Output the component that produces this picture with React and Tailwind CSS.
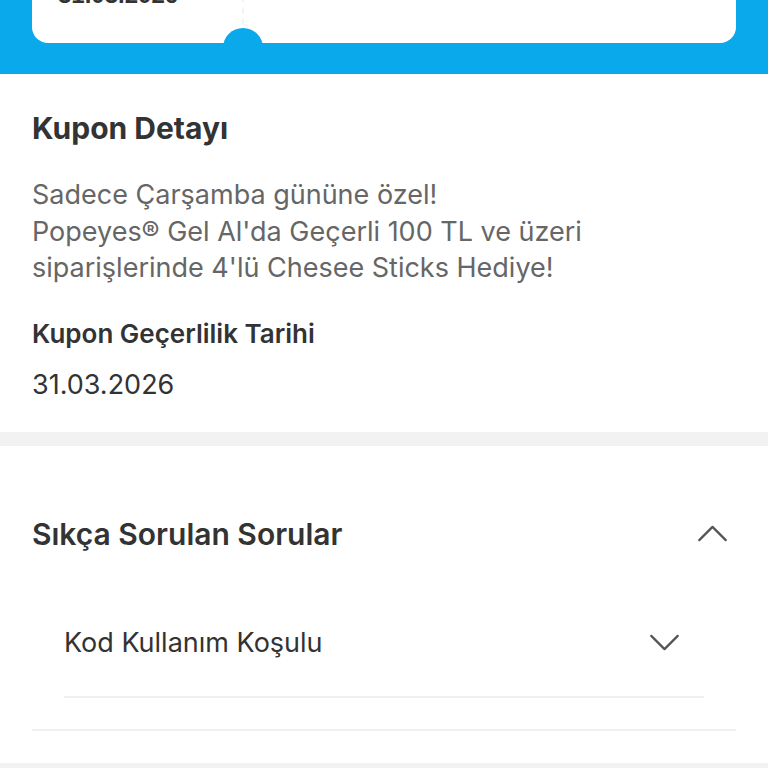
const font = { fontFamily: 'Inter, "Noto Sans", sans-serif' }

function Chevron({ up, className }) {
  return (
    <svg viewBox="0 0 32 18" className={className} fill="none" stroke="currentColor" strokeWidth="2.4" strokeLinecap="round" strokeLinejoin="round">
      <polyline points={up ? '2,16 16,2 30,16' : '2,2 16,16 30,2'} />
    </svg>
  )
}

function CouponTop() {
  return (
    <div className="flex h-[74px] flex-col bg-[#0aa9ec] px-8">
      <div className="relative -mt-[60px] flex h-[103px] flex-col justify-end rounded-b-2xl bg-white pb-[36px] pl-[26px]">
        <span className="text-[24px] font-bold leading-none text-[#333]" style={{ fontFamily: '"Liberation Sans", Arial, sans-serif' }}>
          31.03.2026
        </span>
        <div className="absolute bottom-[18px] left-[210px] h-[40px] border-l-2 border-dashed border-gray-100" />
        <div className="absolute -bottom-[25px] left-[191px] h-[40px] w-[40px] rounded-full bg-[#0aa9ec]" />
      </div>
    </div>
  )
}

function CouponDetail() {
  return (
    <section className="bg-white px-8 pb-[29px] pt-[36px]">
      <h2 className="text-[30px] font-bold leading-[36px] text-[#333]">Kupon Detayı</h2>
      <p className="mt-[31px] text-[27px] leading-[36.5px] text-[#666]">
        Sadece Çarşamba gününe özel!
        <br />
        Popeyes® Gel Al'da Geçerli 100 TL ve üzeri
        <br />
        siparişlerinde 4'lü Chesee Sticks Hediye!
      </p>
      <h3 className="mt-[29px] text-[26px] font-semibold leading-[36px] text-[#333]">Kupon Geçerlilik Tarihi</h3>
      <p className="mt-[15px] text-[27px] leading-[36px] text-[#333]">31.03.2026</p>
    </section>
  )
}

function Faq() {
  return (
    <section className="bg-white px-8 pt-[70px] pb-[32px]">
      <div className="flex items-center justify-between">
        <h2 className="text-[30px] font-semibold leading-[36px] text-[#333]">Sıkça Sorulan Sorular</h2>
        <Chevron up className="mr-[8px] h-[17px] w-[31px] text-[#555]" />
      </div>
      <div className="border-b-2 border-[#f0f0f0] px-8 pt-[73px] pb-[31px]">
        <div className="flex items-center justify-between border-b-2 border-[#f0f0f0] pb-[35px]">
          <span className="text-[27px] leading-[36px] text-[#333]">Kod Kullanım Koşulu</span>
          <Chevron className="mr-[24px] h-[17px] w-[31px] text-[#555]" />
        </div>
      </div>
    </section>
  )
}

export default function App() {
  return (
    <div className="min-h-[768px] bg-[#f2f2f2]" style={font}>
      <CouponTop />
      <CouponDetail />
      <div className="h-[14px]" />
      <Faq />
    </div>
  )
}
